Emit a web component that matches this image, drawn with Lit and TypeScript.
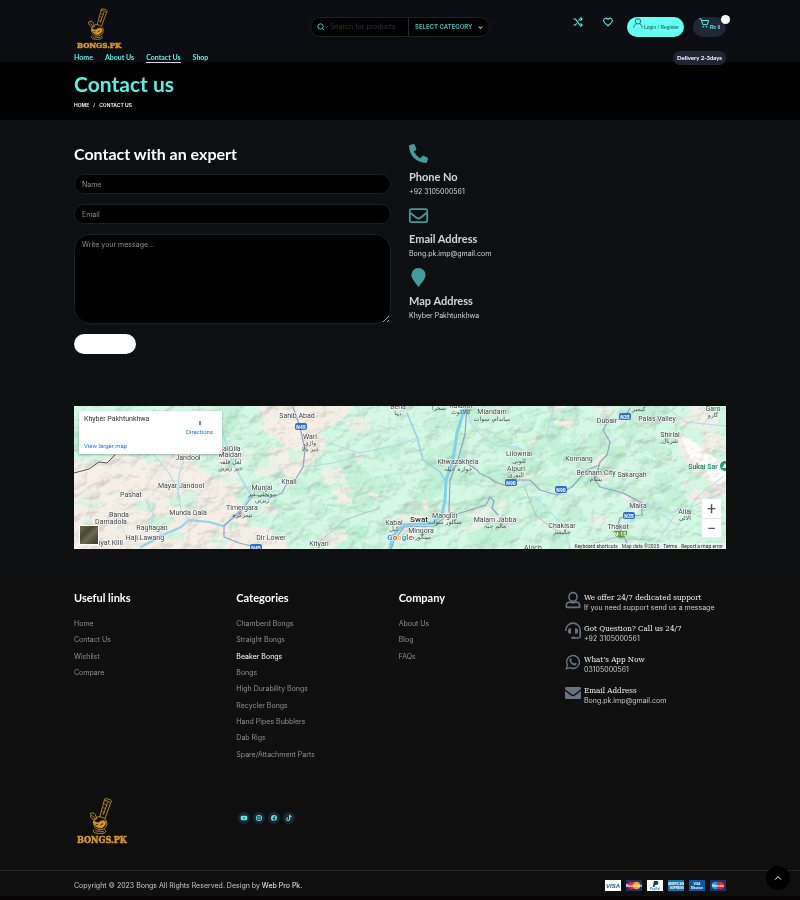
import { LitElement, html, svg, css } from "lit";
import { customElement, property } from "lit/decorators.js";

type Label = [number, number, string];

const NAV = ["Home", "About Us", "Contact Us", "Shop"];
const LINK_COLUMNS = [
  { title: "Useful links", items: ["Home", "Contact Us", "Wishlist", "Compare"] },
  {
    title: "Categories",
    items: ["Chamberd Bongs", "Straight Bongs", "Beaker Bongs", "Bongs", "High Durability Bongs",
      "Recycler Bongs", "Hand Pipes Bubblers", "Dab Rigs", "Spare/Attachment Parts"],
  },
  { title: "Company", items: ["About Us", "Blog", "FAQs"] },
];

const phonePath = "M493.4 24.600l-104-24c-11.300-2.600-22.900 3.300-27.500 13.900l-48 112c-4.200 9.800-1.400 21.300 6.900 28l60.600 49.600c-36 76.700-98.900 140.500-177.200 177.200l-49.600-60.600c-6.800-8.300-18.200-11.100-28-6.900l-112 48C3.900 366.500-2 378.100.6 389.400l24 104C27.100 504.200 36.700 512 48 512c256.100 0 464-207.500 464-464 0-11.200-7.700-20.900-18.600-23.400z";

const icons = {
  search: svg`<circle cx="10.500" cy="10.500" r="8" fill="none" stroke="currentColor" stroke-width="2.500"/><path d="M16 16l6 6" fill="none" stroke="currentColor" stroke-width="2.500"/>`,
  chevron: svg`<path d="M3 8l9 8 9-8" fill="none" stroke="currentColor" stroke-width="5"/>`,
  up: svg`<path d="M3 17l9-9 9 9" fill="none" stroke="currentColor" stroke-width="3"/>`,
  shuffle: svg`<path d="M1 5h5l10 14h6M1 19h5l3-4M13 9l3-4h6M18 1l4 4-4 4M18 15l4 4-4 4" fill="none" stroke="currentColor" stroke-width="2.500"/>`,
  heart: svg`<path d="M12 21C5 16 1.500 12.500 1.500 8.500 1.500 2 9 .8 12 6 15 .8 22.500 2 22.500 8.500 22.500 12.500 19 16 12 21z" fill="none" stroke="currentColor" stroke-width="2.500"/>`,
  person: svg`<circle cx="12" cy="8" r="6.500" fill="none" stroke="currentColor" stroke-width="2"/><path d="M2 23c0-4 2-7 6-9M22 23c0-4-2-7-6-9" fill="none" stroke="currentColor" stroke-width="2"/>`,
  cart: svg`<path d="M1 2h4l4 14h11l3-10H6" fill="none" stroke="currentColor" stroke-width="2.400"/><circle cx="10" cy="21" r="2" fill="currentColor"/><circle cx="18" cy="21" r="2" fill="currentColor"/>`,
  phone: svg`<path transform="translate(24 0) scale(-.046875 .046875)" d=${phonePath} fill="currentColor"/>`,
  mail: svg`<rect x="1" y="4" width="22" height="16.500" rx="2" fill="none" stroke="currentColor" stroke-width="2.200"/><path d="M1.500 8.500l8 6.300c1.500 1.200 3.500 1.200 5 0l8-6.300" fill="none" stroke="currentColor" stroke-width="2.200"/>`,
  pin: svg`<path d="M12 24C8 18 3 13.500 3 9a9 9 0 0 1 18 0c0 4.500-5 9-9 15z" fill="currentColor"/>`,
  agent: svg`<rect x="6" y="1" width="12" height="13" rx="6" fill="none" stroke="currentColor" stroke-width="2.400"/><path d="M8 15c-4 0-6 2-6 5v2c0 .6.400 1 1 1h18c.6 0 1-.4 1-1v-2c0-3-2-5-6-5-2 1.200-6 1.200-8 0z" fill="none" stroke="currentColor" stroke-width="2.400"/>`,
  headset: svg`<path d="M1.200 12v-1a10.800 10.800 0 0 1 21.600 0v8.500a3 3 0 0 1-3 3H13" fill="none" stroke="currentColor" stroke-width="2.400"/><path d="M9 8v8H7.500a3 3 0 0 1-3-3v-2a3 3 0 0 1 3-3zM15 8v8h1.500a3 3 0 0 0 3-3v-2a3 3 0 0 0-3-3z" fill="currentColor"/><rect x="9.500" y="20.500" width="6" height="3.500" rx="1.700" fill="currentColor"/>`,
  whatsapp: svg`<path d="M2 22l1.500-5.400A9.700 9.700 0 1 1 7.300 20.500z" fill="none" stroke="currentColor" stroke-width="2.100"/><path d="M8 6.500c1-.6 1.600.2 2 1.700.3 1-.6 1.400-.8 2 1 2 2.400 3.300 4.400 4.100.8-.3 1.200-1.500 2-1.200 1.600.7 2.300 1 2 2-.5 1.700-2.200 2.300-3.900 2C10 16 6.800 12.500 6.500 9.500c0-1.200.6-2.400 1.500-3z" fill="currentColor"/>`,
  envelope: svg`<path d="M2 3h20a2 2 0 0 1 2 2v1.500L14 14c-1.300.9-2.700.9-4 0L0 6.500V5a2 2 0 0 1 2-2z" fill="currentColor"/><path d="M0 9l9 6.700c2 1.400 4 1.400 6 0L24 9v10a2 2 0 0 1-2 2H2a2 2 0 0 1-2-2z" fill="currentColor"/>`,
  youtube: svg`<path fill-rule="evenodd" d="M3 3h18a4 4 0 0 1 4 4v10a4 4 0 0 1-4 4H3a4 4 0 0 1-4-4V7a4 4 0 0 1 4-4zM9.500 8v8l7-4z" fill="currentColor"/>`,
  instagram: svg`<rect x="2" y="2" width="20" height="20" rx="6" fill="none" stroke="currentColor" stroke-width="3.500"/><circle cx="12" cy="12" r="4.500" fill="none" stroke="currentColor" stroke-width="3"/><circle cx="18" cy="6" r="1.500" fill="currentColor"/>`,
  facebook: svg`<path d="M24 12A12 12 0 1 0 10 23.800V15.500H7V12h3V9.400C10 6.400 11.800 4.700 14.600 4.700c1.300 0 2.600.3 2.600.3v2.900h-1.500c-1.500 0-1.900.9-1.900 1.800V12h3.300l-.6 3.500h-2.700v8.300A12 12 0 0 0 24 12z" fill="currentColor"/>`,
  tiktok: svg`<path d="M12 -1H17c.3 3 2 5 5 5.500V10c-2 0-3.600-.6-5-1.600V16a8 8 0 1 1-9-8v5A3.600 3.600 0 1 0 12 16z" fill="currentColor"/>`,
};
type IconName = keyof typeof icons;

@customElement("ui-icon")
class UiIcon extends LitElement {
  @property() name: IconName = "search";
  static styles = css`
    :host { display: block; flex: none; }
    svg { display: block; width: 100%; height: 100%; overflow: visible; }
  `;
  render() {
    return html`<svg viewBox="0 0 24 24" aria-hidden="true">${icons[this.name]}</svg>`;
  }
}

@customElement("brand-logo")
class BrandLogo extends LitElement {
  static styles = css`
    :host { display: flex; flex-direction: column; align-items: center; color: #d3962a; }
    svg { display: block; width: 24px; flex: 1; min-height: 0; }
    span { font: 700 var(--logo-size, 8px)/10px "DejaVu Serif Condensed", "DejaVu Serif", serif; -webkit-text-stroke: 0.5px currentColor; }
  `;
  render() {
    return html`
      <svg viewBox="2 0 42 64" fill="none" stroke="currentColor" stroke-width="1.500" aria-hidden="true">
        <path d="M28 2c4-1 10 1 12 4l-2 3c-3-3-8-4-11-4zM27 5L19 34M38 9L28 37M33 8l-8 22" />
        <path d="M26 11l6 2M24 17l5 2M22 24l6 2" stroke-width="1" />
        <path d="M14 34c-6 4-8 12-3 18 5 5 14 5 18 0 4-5 3-11-1-15-4-3-10-5-14-3z" />
        <path d="M8 42c4-1 5 3 9 2 4-4 9-5 12-2 1 5-3 10-8 11-6 0-11-4-13-11z" fill="currentColor" />
        <path d="M12 46l4 2M20 48l5-3" stroke="#0d0e10" />
        <path d="M2 28c2-2 8-2 9 1l3 8-5 2c-4-2-7-6-7-11zM4 30l7 6" />
        <path d="M10 55c-4 3-2 6 3 7 5 1 11 1 15-1 3-2 1-5-2-6M11 58l15 1" />
      </svg>
      <span>BONGS.PK</span>
    `;
  }
}

const PLACES: Label[] = [
  [114, 54, "Jandool"], [156, 45, "LalQila"], [156, 51, "Maidan"], [107, 82, "Mayar Jandool"],
  [57, 91, "Pashat"], [45, 111, "Banda"], [37, 118, "Damadola"], [114, 109, "Munda Qala"],
  [78, 124, "Raghagan"], [71, 134, "Haji Lawang"], [168, 104, "Timergara"], [188, 84, "Munjai"],
  [215, 78, "Khall"], [197, 134, "Dir Lower"], [33, 139, "Inayat Killi"], [223, 12, "Sahib Abad"],
  [236, 33, "Wari"], [324, 3, "Beha"], [387, 2, "Kalakot"], [418, 8, "Miandam"],
  [384, 58, "Khwazakhela"], [445, 50, "Lilownai"], [442, 65, "Alpuri"], [371, 112, "Manglor"],
  [347, 127, "Mingora"], [320, 119, "Kabal"], [421, 116, "Malam Jabba"], [245, 140, "Kityari"],
  [533, 17, "Dubair"], [583, 15, "Palas Valley"], [596, 31, "Shirial"], [639, 5, "Garo"],
  [505, 55, "Konnang"], [522, 69, "Besham City"], [558, 71, "Sakargah"], [564, 102, "Maira"],
  [488, 122, "Chakisar"], [544, 123, "Thakot"], [611, 108, "Allai"], [459, 144, "Aloch"],
];
const URDU: Label[] = [
  [156, 58, "لعل قلعہ"], [156, 64, "دیر زیریں"], [168, 111, "تیمرگرہ"], [188, 90, "مونجئی دیر"],
  [188, 96, "زیریں"], [236, 39, "واڑی"], [236, 45, "دیر بالا"], [324, 9, "بہا"], [365, 4, "سخرا"],
  [387, 8, "کالاکوٹ"], [418, 15, "میاندام، سوات"], [384, 65, "خوازہ خیلہ"], [445, 57, "للونی"],
  [442, 71, "الپوری"], [371, 118, "منگلور سوات"], [347, 133, "مینگورہ"], [320, 125, "کبل"],
  [421, 122, "مالم جبہ"], [565, 5, "کیمیر"], [596, 37, "شریال"], [639, 11, "گارو"],
  [522, 75, "بشام"], [488, 128, "چکیسر"], [611, 114, "آلائی"],
];
const SHIELDS: Label[] = [
  [227, 21, "N45"], [182, 142, "N45"], [437, 77, "N90"], [487, 84, "N90"], [551, 11, "N35"], [555, 110, "N35"],
];

@customElement("area-map")
class AreaMap extends LitElement {
  static styles = css`
    :host { display: block; position: relative; height: 143px; overflow: hidden; background: #d3f8e3; font-family: Roboto, sans-serif; color: #333; }
    .terrain { display: block; width: 100%; height: 100%; }
    .place { font: 400 7px Roboto, sans-serif; fill: #3c4043; stroke: #fff; stroke-width: 1px; paint-order: stroke; text-anchor: middle; }
    .urdu { font: 6px "DejaVu Sans", sans-serif; fill: #4b5054; text-anchor: middle; }
    .city { font: 500 8px Roboto, sans-serif; fill: #222; stroke: #fff; stroke-width: 1px; paint-order: stroke; text-anchor: middle; }
    .peak { font: 500 7px Roboto, sans-serif; fill: #138a61; text-anchor: middle; }
    .shield { font: 700 5px Roboto, sans-serif; fill: #fff; text-anchor: middle; }
    .google { font: 700 8px Roboto, sans-serif; stroke: #fff; stroke-width: 1px; paint-order: stroke; text-anchor: middle; }
    .relief { mix-blend-mode: multiply; opacity: 0.18; }
    .card { position: absolute; left: 5px; top: 5px; width: 143px; height: 43px; box-sizing: border-box; padding: 4px 5px; display: grid; grid-template-columns: 1fr auto; background: #fff; box-shadow: 0 1px 2px #0004; font-size: 7px; line-height: 9px; }
    .card a, .legal a { text-decoration: none; }
    .card a { color: #1a73e8; font-size: 6px; }
    .directions { display: grid; justify-items: center; padding: 5px 4px 0 0; }
    .directions i { width: 2px; height: 4px; margin-top: 1px; background: #4b94ee; }
    .larger { align-self: end; }
    .thumb { position: absolute; left: 5px; bottom: 4px; width: 20px; height: 20px; padding: 0; border: 1px solid #fff; background: linear-gradient(135deg, #6e6a50, #45482f 35%, #70694f 55%, #353b28); }
    .zoom { position: absolute; right: 5px; bottom: 12px; width: 19px; display: grid; background: #fff; }
    .zoom button { height: 19px; padding: 0; border: 0; background: none; color: #555; font: 400 16px/19px Roboto, sans-serif; }
    .zoom button + button { border-top: 1px solid #e6e6e6; }
    .legal { position: absolute; right: 0; bottom: 0; display: flex; gap: 4px; padding: 0 3px; background: #f5f5f5aa; font-size: 5px; line-height: 6px; }
    .legal a { color: #222; }
  `;

  private patches() {
    let seed = 17;
    const rnd = () => (seed = (seed * 16807) % 2147483647) / 2147483647;
    return Array.from({ length: 300 }, () => {
      const x = rnd() * 652;
      const y = rnd() * 143;
      const r = 2 + rnd() * 10;
      const pts = Array.from({ length: 9 }, (_, k) => {
        const a = (k / 9) * Math.PI * 2;
        const d = r * (0.4 + rnd() * 0.9);
        return `${(x + Math.cos(a) * d * 1.400).toFixed(1)},${(y + Math.sin(a) * d).toFixed(1)}`;
      }).join(" ");
      const dry = (x < 170 && y > 45) || (x > 170 && x < 270 && y < 75) || x > 610;
      const pick = rnd();
      const fill = dry ? (pick < 0.6 ? "#f5f0e8" : "#cdf5de") : pick < 0.87 ? "#c0f0d5" : "#f2f0e6";
      return svg`<polygon points=${pts} fill=${fill} opacity="0.750"/>`;
    });
  }

  render() {
    return html`
      <svg class="terrain" viewBox="0 0 652 143" preserveAspectRatio="xMidYMid slice" role="img" aria-label="Map of Khyber Pakhtunkhwa">
        <filter id="hills" x="0" y="0" width="100%" height="100%" color-interpolation-filters="sRGB">
          <feTurbulence type="fractalNoise" baseFrequency="0.050 0.070" numOctaves="4" seed="5" />
          <feDiffuseLighting surfaceScale="6" diffuseConstant="1.150" lighting-color="#fff">
            <feDistantLight azimuth="225" elevation="60" />
          </feDiffuseLighting>
        </filter>
        <path fill="#f5efe6" d="M0 64l25-8 18-8 30 4 38-3 22 18 20 10 18 26 4 16 30 6 10 18H0zM185 0h95l-12 14-22 10 6 14-20 26-16 12-12-20 6-18-18-14zM258 84l24-6 22 2 0 12-18 6-24-2zM335 92l30 4-10 20-18 4zM520 52l12-14 6 24-4 16-12 2zM540 78l30 10 6 16-14 4zM602 26l50 28v38l-28-20-18-24zM480 0h26l-10 22-18-6zM416 80l20-6-6 26-22 4z" />
        ${this.patches()}
        <path fill="#fff" opacity="0.800" d="M606 30l14 4 10 12 22 10v24l-14-4-8-16-14-8z" />
        <rect class="relief" width="652" height="143" filter="url(#hills)" />
        <g fill="none" stroke-linejoin="round" stroke-linecap="round">
          <g stroke="#a6dcee" stroke-width="1">
            <path d="M80 49l15 18 9 17 3 20 8 10M110 54l-5 15-1 15M72 94l7 14-2 14M255 37l30 10 40-8 20-8M229 61l30-4 30-8M391 1l8 20 20 18 26 2M480 0l-8 30M530 80l40 16 34 24 20-30 26-20M590 0l22 16 40 4M460 90l30 30 6 22M640 90l-40 20-20 32" />
            <path d="M148 24l10 32 10 18 9 15-10 14-18 17" stroke-width="1.500" />
          </g>
          <path d="M149 120l-14-4-20-2-8 7-18 8-22 12" stroke="#8fd3e8" stroke-width="2" />
          <path d="M333 7l10 24 6 23 17 12 6 10" stroke="#8fd3e8" stroke-width="1.500" />
          <path d="M391 1l-8 26-4 27-7 20-1 20-3 15-9 8-30 2-11 12-2 12" stroke="#80d2ea" stroke-width="3" />
          <g stroke="#8fa3c9" stroke-width="1.200">
            <path d="M212 79l-4 8-9 4-20-2-10 14-19 17 0 11 15 6 17 4M219 1l7 20 5 23-2 17-8 13-9 5" />
            <path d="M393 1l-2 27-7 26-8 20-1 32 8 2 23-7 6-2 4-8 4 4-2 7 6 7M376 107l-16 13-30 1-10 14-3 9" />
            <path d="M387 57l7 1 9 6 2 3 11 5 5 4 12 4 4-6 19 0 10 10 17 5 15-8 15-17 12-5" />
            <path d="M556 2l-5 9-18 6-4 7 7 12-3 13-7 7-5 18 5 7 23 6 19 10 0 12-22 3-2 7 9 18" />
          </g>
          <path d="M245 136l26-22 34-12M450 80l12 30 22 16M510 140l30-8 36 2" stroke="#b4c4c2" stroke-width="1" />
          <path d="M0 67l15-4 10-7 8 1 8-8" stroke="#555" stroke-width="1" />
        </g>
        ${PLACES.map(([x, y, t]) => svg`<text class="place" x=${x} y=${y}>${t}</text>`)}
        ${URDU.map(([x, y, t]) => svg`<text class="urdu" x=${x} y=${y}>${t}</text>`)}
        <text class="city" x="345" y="116">Swat</text>
        <text class="peak" x="629" y="63">Sukai Sar</text>
        <circle cx="651" cy="60" r="5" fill="#159b6f" />
        <path d="M648 62l3-5 3 5z" fill="#fff" />
        ${SHIELDS.map(([x, y, t]) => svg`<rect x=${x - 6} y=${y - 4} width="12" height="7" rx="2" fill="#2f6fc8"/><text class="shield" x=${x} y=${y + 2}>${t}</text>`)}
        <path d="M540 125h13v4q-6 6-13 0z" fill="#5f9c35" />
        <text class="shield" x="546" y="130">M-15</text>
        <text class="google" x="326" y="134"><tspan fill="#4285f4">G</tspan><tspan fill="#ea4335">o</tspan><tspan fill="#fbbc04">o</tspan><tspan fill="#4285f4">g</tspan><tspan fill="#34a853">l</tspan><tspan fill="#ea4335">e</tspan></text>
      </svg>
      <div class="card">
        <span>Khyber Pakhtunkhwa</span>
        <a class="directions" href="#directions"><i></i>Directions</a>
        <a class="larger" href="#map">View larger map</a>
      </div>
      <button class="thumb" aria-label="Show satellite imagery"></button>
      <div class="zoom">
        <button aria-label="Zoom in">+</button>
        <button aria-label="Zoom out">−</button>
      </div>
      <div class="legal">
        <a href="#keys">Keyboard shortcuts</a><span>Map data ©2025</span><a href="#terms">Terms</a><a href="#report">Report a map error</a>
      </div>
    `;
  }
}

@customElement("payment-cards")
class PaymentCards extends LitElement {
  static styles = css`
    :host { display: flex; gap: 5px; }
    svg { display: block; width: 16px; height: 11px; }
    text { font: italic 700 6px "Liberation Sans", sans-serif; text-anchor: middle; }
    .tiny { font: 700 3px "Liberation Sans", sans-serif; fill: #fff; }
    .blue { fill: #1a78b8; }
  `;
  render() {
    return html`
      <svg viewBox="0 0 16 11" role="img" aria-label="Visa"><rect width="16" height="11" fill="#fff"/><text x="8" y="8" fill="#1a5a8e">VISA</text></svg>
      <svg viewBox="0 0 16 11" role="img" aria-label="Mastercard"><rect width="16" height="11" fill="#17346c"/><circle cx="5.500" cy="5.500" r="3.800" fill="#e2212d"/><circle cx="10.500" cy="5.500" r="3.800" fill="#f6a11d"/><text class="tiny" x="8" y="6.500">MasterCard</text></svg>
      <svg viewBox="0 0 16 11" role="img" aria-label="PayPal"><rect width="16" height="11" fill="#fff"/><path d="M7 1h3c2 0 2 4-1 4H8l-.6 2H5.800z" fill="#17346c"/><text class="tiny blue" x="8" y="10">PayPal</text></svg>
      <svg viewBox="0 0 16 11" role="img" aria-label="American Express"><rect width="16" height="11" fill="#1277b0"/><text class="tiny" x="8" y="5">AMERICAN</text><text class="tiny" x="9" y="9">EXPRESS</text></svg>
      <svg viewBox="0 0 16 11" role="img" aria-label="Visa Electron"><rect width="16" height="11" fill="#10589b"/><text class="tiny" x="8" y="5">VISA</text><text class="tiny" x="8" y="9">Electron</text></svg>
      <svg viewBox="0 0 16 11" role="img" aria-label="Maestro"><rect width="16" height="11" fill="#17346c"/><circle cx="5.500" cy="5.500" r="3.800" fill="#179bd7"/><circle cx="10.500" cy="5.500" r="3.800" fill="#e2212d"/><text class="tiny" x="8" y="6.500">Maestro</text></svg>
    `;
  }
}

@customElement("app-root")
class AppRoot extends LitElement {
  static styles = css`
    :host { display: block; --aqua: #5eede2; --display: Lato, sans-serif; min-height: 100vh; background: #0d0f11; color: #fff; font: 7px/10px Inter, sans-serif; }
    h1, h2, h3, p, ul { margin: 0; padding: 0; font-weight: 400; }
    ul { list-style: none; }
    a { color: inherit; text-decoration: none; }
    button, input, select, textarea { font: inherit; color: inherit; border: 0; margin: 0; box-sizing: border-box; }
    .wrap { padding-left: 74px; padding-right: 74px; }

    header { height: 62px; background: #0b0d13; position: relative; }
    .top { display: grid; grid-template-columns: 1fr 180px 1fr; align-items: center; height: 51px; padding-top: 3px; box-sizing: border-box; }
    .top brand-logo { justify-self: start; height: 42px; padding: 3px 0 0 3px; }
    .search { display: flex; align-items: center; height: 20px; box-sizing: border-box; border: 1px solid #1f2023; border-radius: 10px; background: #000; color: var(--aqua); padding: 0 6px; }
    .search ui-icon { width: 8px; height: 8px; }
    .search input { flex: 1; min-width: 0; padding: 0 0 0 5px; background: none; outline: 0; }
    .search input::placeholder { color: #303236; }
    .search select { appearance: none; width: 70px; height: 18px; padding: 0 0 0 6px; background: none; border-left: 1px solid #27282b; font-size: 6px; font-weight: 600; color: #3fc5ba; }
    .search .chev { width: 5px; height: 5px; }
    .tools { display: flex; justify-content: flex-end; align-items: center; color: var(--aqua); }
    .tool { display: block; padding: 0; background: none; margin: 0 20px 10px 0; }
    .tool + .tool { margin-right: 14px; }
    .tool ui-icon, .pill ui-icon { width: 10px; height: 10px; }
    .pill { display: flex; align-items: center; gap: 1px; height: 20px; border-radius: 10px; white-space: nowrap; font: 5px/20px "Liberation Sans", sans-serif; box-sizing: border-box; padding: 0 6px; }
    .pill ui-icon { margin-bottom: 9px; }
    .login { width: 57px; margin-right: 9px; background: #66fff3; color: #1c4a4c; }
    .cart { position: relative; width: 33px; background: #202736; }
    .cart b { font-weight: 600; }
    .cart i { position: absolute; right: -4px; top: -2px; width: 9px; height: 9px; border-radius: 50%; background: #fff; }
    .menu { display: flex; justify-content: space-between; height: 14px; }
    nav { display: flex; gap: 12px; font: 700 7px/12px var(--display); color: var(--aqua); }
    nav a { height: 12px; box-sizing: border-box; }
    nav a.on { border-bottom: 1px solid #e0d8e8; }
    .delivery { height: 14px; padding: 0 4px; border-radius: 7px; background: #1f2534; font: 700 6px/14px var(--display); }

    .band { height: 58px; background: #000; box-sizing: border-box; padding-top: 9px; }
    h1 { font: 700 21px/26px var(--display); color: var(--aqua); }
    .crumbs { display: flex; gap: 4px; margin-top: 3px; font: 600 5px/10px Inter, sans-serif; }

    .contact { display: grid; grid-template-columns: 1fr 1fr; gap: 18px; padding-top: 22px; height: 286px; box-sizing: border-box; }
    .contact h2 { font: 700 16px/24px var(--display); margin-bottom: 8px; }
    .message { display: grid; justify-items: start; }
    .field { width: 100%; height: 20px; margin-bottom: 10px; padding: 0 7px; border: 1px solid #1d1e20; border-radius: 10px; background: #000; outline: 0; }
    .field::placeholder { color: #8b8b8b; }
    textarea.field { height: 90px; border-radius: 16px; padding-top: 5px; resize: vertical; }
    .send { width: 62px; height: 20px; border-radius: 10px; background: #fff; }
    .info { display: grid; gap: 9px; align-content: start; padding-top: 2px; color: #d5d5d5; font-weight: 500; }
    .info ui-icon { width: 19px; height: 19px; color: #429c9c; }
    .info h3 { font: 700 11px/14px var(--display); margin: 7px 0 3px; }

    footer { margin-top: 22px; background: #0f0f0f; }
    .cols { display: grid; grid-template-columns: repeat(3, 1fr) 165px; padding-top: 19px; }
    .cols h2 { font: 700 11px/16px var(--display); margin-bottom: 10px; }
    .cols ul { display: grid; grid-template-rows: repeat(9, 1fr); height: 147px; align-items: center; color: #8f8f8f; }
    .cols .current { color: #fff; }
    .help { display: grid; gap: 10px; align-content: start; padding: 2px 0 0 4px; font-weight: 500; }
    .help div { display: grid; grid-template-columns: 16px 1fr; column-gap: 3px; white-space: nowrap; color: #c9c9c9; }
    .help ui-icon { grid-row: span 2; width: 16px; height: 16px; color: #687282; }
    .help h3 { font: 400 8px/11px "DejaVu Serif Condensed", "DejaVu Serif", serif; color: #f2f2f2; }
    .brand { display: grid; grid-template-columns: repeat(3, 1fr) 165px; padding-top: 34px; }
    .brand brand-logo { --logo-size: 9px; justify-self: start; height: 48px; padding-left: 3px; }
    .social { display: flex; gap: 3px; padding: 15px 0 0 2px; color: var(--aqua); }
    .social a { display: grid; place-items: center; width: 12px; height: 12px; border-radius: 50%; background: #1e2433; }
    .social ui-icon { width: 6px; height: 6px; }
    .bottom { display: flex; justify-content: space-between; align-items: center; height: 26px; box-sizing: border-box; margin-top: 25px; padding-top: 4px; border-top: 1px solid #252525; color: #c9c9c9; font-weight: 500; }
    .bottom a { color: #f2f2f2; }
    .edge { height: 4px; background: #070203; }
    .totop { position: fixed; right: 10px; bottom: 10px; display: grid; place-items: center; width: 24px; height: 24px; padding: 0; border-radius: 50%; background: #000; }
    .totop ui-icon { width: 8px; height: 8px; }
  `;

  render() {
    return html`
      <header>
        <div class="wrap top">
          <brand-logo></brand-logo>
          <form class="search" role="search">
            <ui-icon name="search"></ui-icon>
            <input type="text" placeholder="Search for products" aria-label="Search for products" />
            <select aria-label="Category"><option>SELECT CATEGORY</option></select>
            <ui-icon class="chev" name="chevron"></ui-icon>
          </form>
          <div class="tools">
            <a class="tool" href="#compare" aria-label="Compare"><ui-icon name="shuffle"></ui-icon></a>
            <a class="tool" href="#wishlist" aria-label="Wishlist"><ui-icon name="heart"></ui-icon></a>
            <a class="pill login" href="#login"><ui-icon name="person"></ui-icon>Login / Register</a>
            <a class="pill cart" href="#cart"><ui-icon name="cart"></ui-icon><b>₨ 0</b><i></i></a>
          </div>
        </div>
        <div class="wrap menu">
          <nav>${NAV.map((n) => html`<a class=${n === "Contact Us" ? "on" : ""} href="#nav">${n}</a>`)}</nav>
          <span class="delivery">Delivery 2-3days</span>
        </div>
      </header>
      <section class="wrap band">
        <h1>Contact us</h1>
        <div class="crumbs"><a href="#home">HOME</a><span>/</span><span>CONTACT US</span></div>
      </section>
      <main>
        <section class="wrap contact">
          <div>
            <h2>Contact with an expert</h2>
            <form class="message">
              <input class="field" type="text" placeholder="Name" aria-label="Name" />
              <input class="field" type="email" placeholder="Email" aria-label="Email" />
              <textarea class="field" placeholder="Write your message..." aria-label="Message"></textarea>
              <button class="send" type="button" aria-label="Send message"></button>
            </form>
          </div>
          <div class="info">
            <div><ui-icon name="phone"></ui-icon><h3>Phone No</h3><p>+92 3105000561</p></div>
            <div><ui-icon name="mail"></ui-icon><h3>Email Address</h3><p>Bong.pk.imp@gmail.com</p></div>
            <div><ui-icon name="pin"></ui-icon><h3>Map Address</h3><p>Khyber Pakhtunkhwa</p></div>
          </div>
        </section>
        <div class="wrap"><area-map></area-map></div>
      </main>
      <footer>
        <div class="wrap cols">
          ${LINK_COLUMNS.map((c) => html`
            <section>
              <h2>${c.title}</h2>
              <ul>${c.items.map((t) => html`<li><a class=${t === "Beaker Bongs" ? "current" : ""} href="#link">${t}</a></li>`)}</ul>
            </section>`)}
          <div class="help">
            <div><ui-icon name="agent"></ui-icon><h3>We offer 24/7 dedicated support</h3><p>If you need support send us a message</p></div>
            <div><ui-icon name="headset"></ui-icon><h3>Got Question? Call us 24/7</h3><p>+92 3105000561</p></div>
            <div><ui-icon name="whatsapp"></ui-icon><h3>What's App Now</h3><p>03105000561</p></div>
            <div><ui-icon name="envelope"></ui-icon><h3>Email Address</h3><p>Bong.pk.imp@gmail.com</p></div>
          </div>
        </div>
        <div class="wrap brand">
          <brand-logo></brand-logo>
          <div class="social">
            ${(["youtube", "instagram", "facebook", "tiktok"] as IconName[]).map((n) => html`<a href="#social" aria-label=${n}><ui-icon name=${n}></ui-icon></a>`)}
          </div>
        </div>
        <div class="wrap bottom">
          <p>Copyright © 2023 Bongs All Rights Reserved. Design by <a href="#author">Web Pro Pk.</a></p>
          <payment-cards></payment-cards>
        </div>
        <div class="edge"></div>
      </footer>
      <button class="totop" aria-label="Back to top"><ui-icon name="up"></ui-icon></button>
    `;
  }
}
